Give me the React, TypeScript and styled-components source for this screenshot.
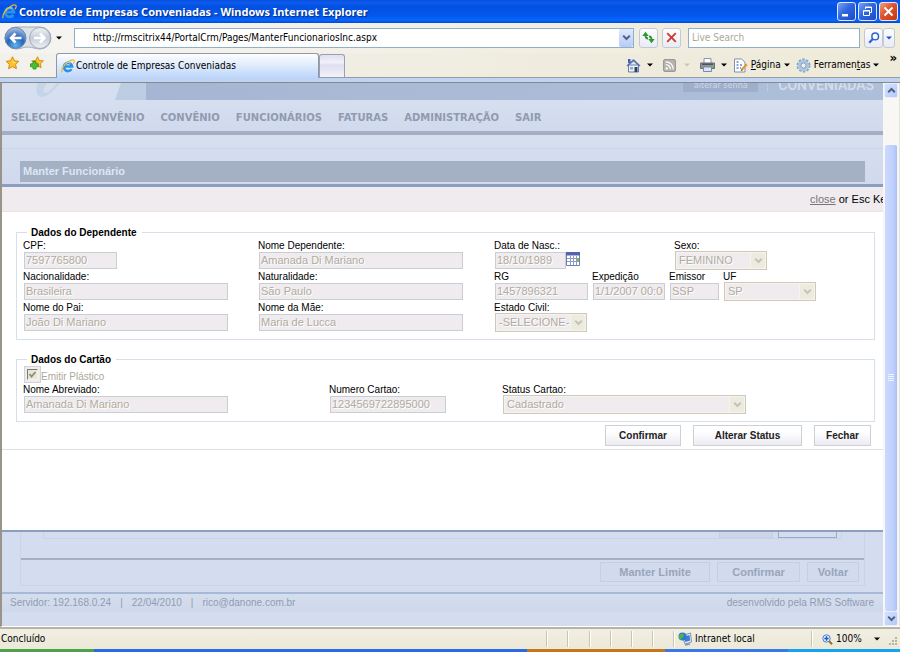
import React from 'react';
import styled, { createGlobalStyle, css } from 'styled-components';

const ui = '"DejaVu Sans Condensed", "DejaVu Sans", sans-serif';
const arial = '"Liberation Sans", Arial, sans-serif';

const GlobalStyle = createGlobalStyle`
  *, *::before, *::after { box-sizing: border-box; }
  body { margin: 0; font-family: ${arial}; font-size: 11px; color: #000; }
  button, input, select { font: inherit; margin: 0; }
`;

const Window = styled.div`
  display: flex;
  flex-direction: column;
  height: 100vh;
  overflow: hidden;
  background: #efecdf;
`;

/* ---------- window title ---------- */
const TitleBar = styled.header`
  display: flex;
  align-items: center;
  flex: none;
  height: 23px;
  padding: 0 2px 0 2px;
  gap: 2px;
  background: linear-gradient(#0a4fdc 0, #0c5cf0 12%, #0350e0 30%, #0458ee 70%, #0667fe 88%, #0349d0 100%);
`;

const WindowTitle = styled.h1`
  flex: 1;
  margin: 0;
  font: bold 11px/20px "Noto Sans", "Open Sans", sans-serif;
  color: #fff;
  text-shadow: 1px 1px 1px #0a2a80;
  white-space: nowrap;
`;

const WindowButton = styled.button<{ $close?: boolean }>`
  display: grid;
  place-items: center;
  width: 19px;
  height: 19px;
  padding: 0;
  border: 1px solid #dfe8ff;
  border-radius: 3px;
  background: ${p => (p.$close
    ? 'linear-gradient(135deg, #f0a080, #e0522c 45%, #c03a12)'
    : 'linear-gradient(135deg, #7ba2f5, #2f66e0 45%, #1c4cc8)')};
`;

/* ---------- toolbars ---------- */
const AddressRow = styled.div`
  display: flex;
  align-items: center;
  flex: none;
  height: 30px;
  padding: 0 5px 1px 4px;
  background: linear-gradient(90deg, #f5f4f2, #f1eee3 60%, #efecdc);
`;

const NavPill = styled.div`
  display: flex;
  align-items: center;
  width: 48px;
  height: 24px;
`;

const BareButton = styled.button`
  display: flex;
  align-items: center;
  padding: 0;
  border: 0;
  background: none;
  color: #000;
  font: 10px/14px ${ui};
  white-space: nowrap;
`;

const AddressBox = styled.div`
  display: flex;
  flex: 1;
  height: 20px;
  margin: 0 5px 0 12px;
  border: 1px solid #8fb0c8;
  background: #fff;
`;

const AddressInput = styled.input`
  flex: 1;
  min-width: 0;
  padding: 0 0 0 18px;
  border: 0;
  background: none;
  font: 10px/18px ${ui};
`;

const DropButton = styled.button`
  display: grid;
  place-items: center;
  width: 14px;
  padding: 0;
  border: 0;
  border-radius: 2px;
  background: linear-gradient(#dfe8fd, #b9cbf5);
`;

const SquareButton = styled.button<{ $w?: number }>`
  display: grid;
  place-items: center;
  width: ${p => p.$w ?? 19}px;
  height: 20px;
  padding: 0;
  border: 1px solid #c3c9d4;
  border-radius: 3px;
  background: linear-gradient(#fdfdfe, #e9ebf5);
`;

const ToolPair = styled.div<{ $gap: number; $left: number }>`
  display: flex;
  gap: ${p => p.$gap}px;
  margin-left: ${p => p.$left}px;
`;

const SearchInput = styled.input`
  width: 172px;
  height: 20px;
  margin-left: 7px;
  padding: 0 3px;
  border: 1px solid #8fb0c8;
  background: #fff;
  font: 10px/18px ${ui};
  &::placeholder { color: #aca899; opacity: 1; }
`;

const TabRow = styled.div`
  display: flex;
  align-items: flex-end;
  flex: none;
  height: 25px;
  padding-left: 5px;
  border-bottom: 1px solid #9c9d9b;
  background: linear-gradient(90deg, #f3f1ec, #efecdf 60%, #eeebda);
`;

const Favorites = styled.div`
  display: flex;
  gap: 9px;
  width: 51px;
  padding-bottom: 7px;
`;

const Tab = styled.button`
  display: flex;
  align-items: center;
  gap: 1px;
  width: 263px;
  height: 25px;
  margin-bottom: -1px;
  padding: 0 4px;
  border: 1px solid #8f98a8;
  border-bottom: 0;
  border-radius: 3px 3px 0 0;
  background: linear-gradient(#fdfeff 0, #e4eefc 40%, #bcd6fb 100%);
  font: 10px/14px ${ui};
  white-space: nowrap;
`;

const NewTab = styled.button`
  width: 26px;
  height: 23px;
  border: 1px solid #9aa0b0;
  border-bottom: 0;
  border-radius: 3px 3px 0 0;
  background: linear-gradient(#dfe1f0 0, #f0f1f9 35%, #dddff0 45%, #f2f2fb 100%);
`;

const Commands = styled.div`
  display: flex;
  align-items: center;
  margin-left: auto;
  height: 24px;
  padding: 0 3px 0 0;
`;

const Command = styled(BareButton)<{ $gap: number; $right: number }>`
  gap: ${p => p.$gap}px;
  margin-right: ${p => p.$right}px;
`;

const Chevrons = styled.span`
  align-self: flex-start;
  font: bold 13px/10px ${ui};
`;

const BlueStrip = styled.div`
  flex: none;
  height: 5px;
  border-bottom: 1px solid #8a8a80;
  background: #bfd3f5;
`;

/* ---------- viewport ---------- */
const Viewport = styled.div`
  display: flex;
  flex: 1;
  min-height: 0;
  border-left: 2px solid #98948a;
  border-bottom: 1px solid #fff;
  background: #fff;
`;

const Page = styled.div`
  display: flex;
  flex-direction: column;
  flex: 1;
  min-width: 0;
  overflow: hidden;
  background: #d4ddef;
  color: #8f9cb2;
`;

const Banner = styled.div`
  display: flex;
  align-items: flex-end;
  flex: none;
  height: 17px;
  overflow: hidden;
  background: linear-gradient(90deg, #a3b2d1, #a9b9d6 40%, #aebfda);
`;

const BannerButton = styled.button`
  height: 14px;
  width: 75px;
  margin: 0 9px 8px auto;
  padding: 0;
  border: 0;
  background: #9fafcb;
  color: #ccd7ea;
  font: 9px/14px ${ui};
`;

const BannerName = styled.strong`
  margin-bottom: 9px;
  padding: 0 9px 0 10px;
  font: 500 14px/12px Roboto, sans-serif;
  color: #d4deee;
  border-left: 1px dotted #ccd7ea;
`;

const MainNav = styled.nav`
  display: flex;
  flex: none;
  gap: 16px;
  height: 35px;
  padding: 11px 9px 0;
  border-bottom: 4px solid #a3afc3;
  background: linear-gradient(#d6dff0, #d1daec);
`;

const NavLink = styled.a`
  color: #8f9bb0;
  font: bold 10px/13px "DejaVu Sans", sans-serif;
  text-decoration: none;
  white-space: nowrap;
`;

const SubHeader = styled.div`
  flex: none;
  padding: 13px 18px 2px;
  background: linear-gradient(#d6dff0, #d1daec);
`;

const PageTitle = styled.h2`
  margin: 0;
  padding: 0 3px;
  background: #a4b0c4;
  color: #dde6f4;
  font: bold 11px/21px ${arial};
`;

const Dotted = styled.hr`
  margin: 0 -18px 12px;
  border: 0;
  border-top: 1px dotted #c3cde0;
`;

/* ---------- dialog ---------- */
const Dialog = styled.section`
  display: flex;
  flex-direction: column;
  flex: none;
  padding-bottom: 80px;
  border-top: 3px solid #8a9ebf;
  border-bottom: 2px solid #8a9ebf;
  background: #fff;
  color: #000;
`;

const CloseBar = styled.div`
  display: flex;
  justify-content: flex-end;
  height: 25px;
  border-bottom: 1px solid #e6e4e8;
  background: #efebee;
  font: 11px/25px ${arial};
  white-space: pre;
  overflow: hidden;
`;

const CloseText = styled.span`
  width: 73px;
  flex: none;
  a { color: #777; }
`;

const DialogForm = styled.form`
  display: flex;
  flex-direction: column;
  gap: 13px;
  padding: 14px 8px 3px 14px;
  border-bottom: 1px solid #dcdfe6;
`;

const Group = styled.fieldset`
  min-width: 0;
  margin: 0;
  padding: 0 6px 7px;
  border: 1px solid #d5e0ea;
`;

const Legend = styled.legend`
  margin-left: 4px;
  padding: 0 5px 0 4px;
  font: bold 10px/13px ${arial};
`;

const FieldRow = styled.div<{ $cols: string }>`
  display: grid;
  grid-template-columns: ${p => p.$cols};
  height: 31px;
`;

const FieldSet = styled.div`
  display: flex;
`;

const Field = styled.label<{ $slot?: number }>`
  display: block;
  width: ${p => (p.$slot ? `${p.$slot}px` : 'auto')};
  font: 10px/13px ${arial};
  white-space: nowrap;
`;

const disabledText = css`
  color: #b0ac9f;
  opacity: 1;
  text-shadow: 1px 1px #fff;
  font: 11px/15px ${arial};
`;

const TextInput = styled.input<{ $w: number }>`
  display: block;
  width: ${p => p.$w}px;
  height: 17px;
  margin-left: 1px;
  padding: 0 1px 1px;
  border: 1px solid #c8ced2;
  border-radius: 0;
  background: #efebee;
  ${disabledText}
`;

const DateLine = styled.span`
  display: flex;
  align-items: flex-start;
`;

const SelectBox = styled.span<{ $w: number }>`
  display: flex;
  width: ${p => p.$w}px;
  height: 19px;
  margin: -1px 0 0 1px;
  padding: 1px;
  border: 1px solid #cfc9bb;
  background: #f5f4ea;
`;

const Select = styled.select`
  flex: 1;
  min-width: 0;
  padding: 0 0 0 2px;
  border: 0;
  appearance: none;
  background: #efebee;
  ${disabledText}
`;

const SelectArrow = styled.span`
  display: grid;
  place-items: center;
  width: 14px;
  margin-left: 1px;
  border-radius: 2px;
  background: #edebe0;
`;

const CheckLine = styled.label`
  display: flex;
  align-items: flex-end;
  height: 17px;
  margin-left: 1px;
  color: #aca899;
  font: 10px/13px ${arial};
`;

const CheckFrame = styled.span`
  display: grid;
  place-items: center;
  width: 17px;
  height: 17px;
  border: 1px solid #d0d2d6;
  background: #efebee;
  & > * { grid-area: 1 / 1; }
`;

const Check = styled.input`
  appearance: none;
  width: 11px;
  height: 11px;
  border: 1px solid;
  border-color: #7d7b70 #f5f3ea #f5f3ea #7d7b70;
  background: #e9e6d8;
`;

const DialogActions = styled.div`
  display: flex;
  justify-content: flex-end;
  gap: 12px;
  margin-top: -10px;
  padding-right: 4px;
`;

const ActionButton = styled.button<{ $w: number }>`
  width: ${p => p.$w}px;
  height: 21px;
  padding: 0;
  border: 1px solid #cfd0d4;
  background: linear-gradient(#fff 30%, #ecebf2);
  color: #222;
  font: bold 10px/17px ${arial};
`;

/* ---------- lower page ---------- */
const Lower = styled.div`
  flex: none;
  margin: 0 18px;
  border: 1px solid #cad4e7;
  border-top: 0;
`;

const InnerPanel = styled.div`
  display: flex;
  justify-content: flex-end;
  gap: 5px;
  height: 7px;
  margin: 0 22px 19px;
  padding-right: 4px;
  border: 1px solid #c9d3e6;
  border-top: 0;
`;

const CutButton = styled.span<{ $w: number; $strong?: boolean }>`
  width: ${p => p.$w}px;
  height: 6px;
  border: 1px solid ${p => (p.$strong ? '#9cabc2' : '#c6d0e2')};
  border-top: 0;
  background: ${p => (p.$strong ? '#d4ddef' : '#cdd7e9')};
`;

const LowerActions = styled.div`
  display: flex;
  justify-content: flex-end;
  gap: 7px;
  padding: 2px 5px 3px;
  border-top: 2px solid #a3b0c5;
`;

const FadedButton = styled(ActionButton)`
  height: 20px;
  border-color: #c5cfe1;
  background: #d2dbed;
  color: #98a5ba;
  font-size: 11px;
`;

const Footer = styled.footer`
  display: flex;
  flex: none;
  gap: 9px;
  height: 20px;
  margin-top: 6px;
  padding: 0 9px 0 8px;
  border-top: 2px solid #a7b9d6;
  background: linear-gradient(#d5deef, #cfd8ea);
  font: 10px/17px ${arial};
  white-space: nowrap;
`;

const FooterRight = styled.span`
  margin-left: auto;
`;

/* ---------- scrollbar ---------- */
const ScrollBar = styled.div`
  display: flex;
  flex-direction: column;
  flex: none;
  width: 17px;
  padding: 0 1px;
  border-right: 1px solid #e6e3d6;
  background: #f8f7f3;
`;

const ScrollButton = styled.button`
  display: grid;
  place-items: center;
  height: 15px;
  padding: 0;
  border: 1px solid #e6edff;
  border-radius: 2px;
  background: linear-gradient(135deg, #d6e2fd, #b4c8f8);
`;

const ScrollThumb = styled.div`
  display: grid;
  place-items: center;
  flex: 1;
  margin: 47px 1px 0;
  border-radius: 2px;
  background: linear-gradient(90deg, #cbd9ff, #bed0fd 70%, #a9bff5);
`;

/* ---------- status bar ---------- */
const StatusBar = styled.div`
  display: flex;
  align-items: stretch;
  flex: none;
  height: 22px;
  padding: 2px 2px 0 1px;
  border-top: 2px solid #b8b4a4;
  background: linear-gradient(#f1eee3, #ece9d8);
  font: 10px/16px ${ui};
`;

const StatusText = styled.span`
  flex: 1;
`;

const StatusCell = styled.span<{ $w: number }>`
  display: flex;
  align-items: center;
  gap: 3px;
  width: ${p => p.$w}px;
  height: 16px;
  padding-left: 4px;
  border-left: 1px solid #c9c5b4;
  box-shadow: inset 1px 0 #fff;
`;

const ZoomButton = styled(BareButton)`
  gap: 3px;
  width: 64px;
  padding-left: 6px;
  svg:last-child { margin-left: auto; }
`;

const TaskBar = styled.div`
  display: grid;
  grid-template-columns: 94fr 433fr 138fr 123fr 112fr;
  flex: none;
  height: 3px;
`;

const TaskPart = styled.span<{ $c: string }>`
  background: ${p => p.$c};
`;

/* ---------- drawings ---------- */
const IELogo = ({ size }: { size: number }) => (
  <svg width={size} height={size} viewBox="0 0 16 16" fill="none" aria-hidden="true">
    <path d="M4.5 8.6h8.2A4.7 4.7 0 1 0 12 11.6" stroke="#2b93e6" strokeWidth="3" />
    <path d="M4 7.3a4.6 4.6 0 0 1 7-2.600" stroke="#8fd2fb" strokeWidth="1.400" />
    <path d="M1.4 15.2C-.6 12.4 4 5.600 9 2.600 12 .8 15.200.2 15.200 2.500 15.200 3.600 14.600 4.600 14 5.400" stroke="#f0b429" strokeWidth="1.300" />
  </svg>
);

const Caret = ({ color = '#000' }: { color?: string }) => (
  <svg width="6" height="4" viewBox="0 0 6 4" aria-hidden="true"><path d="M0 .5h6L3 3.500z" fill={color} /></svg>
);

const Chevron = ({ color = '#4d6185', up = false }: { color?: string; up?: boolean }) => (
  <svg width="9" height="7" viewBox="0 0 9 7" fill="none" aria-hidden="true">
    <path d={up ? 'M1.200 5.200 4.500 2l3.300 3.200' : 'M1.200 1.600 4.500 5l3.300-3.400'} stroke={color} strokeWidth="2" />
  </svg>
);

const BackForward = () => (
  <svg width="48" height="24" viewBox="0 0 48 24" aria-hidden="true">
    <defs>
      <radialGradient id="back" cx=".5" cy=".85" r=".8">
        <stop offset="0" stopColor="#5fb4ee" /><stop offset=".5" stopColor="#2465bd" /><stop offset="1" stopColor="#9fb9dc" />
      </radialGradient>
      <linearGradient id="fwd" x1="0" y1="0" x2="0" y2="1">
        <stop offset="0" stopColor="#f2f4f8" /><stop offset=".5" stopColor="#c5ccd9" /><stop offset="1" stopColor="#edf1f7" />
      </linearGradient>
    </defs>
    <path d="M12 1h24a11 11 0 0 1 0 22c-5 0-7-2-12-2s-7 2-12 2A11 11 0 0 1 12 1z" fill="#dde1e8" stroke="#a5abb6" />
    <circle cx="11.500" cy="12" r="10.500" fill="url(#back)" stroke="#6c87ad" />
    <path d="M17.500 12H7m4.500-4.500L7 12l4.500 4.500" stroke="#fff" strokeWidth="2.600" fill="none" />
    <circle cx="36" cy="12" r="10.500" fill="url(#fwd)" stroke="#a3a9b5" />
    <path d="M30 12h10.500M36 7.500l4.500 4.500-4.500 4.500" stroke="#fff" strokeWidth="2.600" fill="none" />
  </svg>
);

const star = 'M7 .8l1.900 4 4.400.5-3.200 3 .8 4.400L7 10.600l-3.900 2.100.8-4.400-3.200-3 4.400-.5z';
const Star = () => (
  <svg width="15" height="14" viewBox="0 0 14 14" aria-hidden="true">
    <path d={star} fill="#fcc42c" stroke="#d88a14" /><path d="M7 3l1 3 3 .2-3.500.8z" fill="#ffe98c" />
  </svg>
);
const AddStar = () => (
  <svg width="15" height="14" viewBox="0 0 14 14" aria-hidden="true">
    <path d={star} transform="translate(1.500 0) scale(.93)" fill="#fcc42c" stroke="#d88a14" />
    <path d="M3.500 5.500h3v2.300h2.300v3H6.500V13h-3v-2.200H1v-3h2.500z" fill="#4cc22e" stroke="#2b8a1b" strokeWidth=".8" />
  </svg>
);

const Home = () => (
  <svg width="15" height="15" viewBox="0 0 15 15" aria-hidden="true">
    <path d="M2.500 7h10v7h-10z" fill="#eef1f8" stroke="#6b7d9f" />
    <path d="M2 1h2.500v4H2z" fill="#3f62b8" />
    <path d="M7.500 1 .5 7.500l1.300 1L7.500 3.500l5.700 5 1.300-1z" fill="#5873b8" />
    <path d="M8.500 9h3v5h-3z" fill="#27406f" /><path d="M4 9h3v2.500H4z" fill="#86a9dd" />
  </svg>
);
const Feed = () => (
  <svg width="13" height="13" viewBox="0 0 13 13" fill="none" aria-hidden="true">
    <rect x=".5" y=".5" width="12" height="12" rx="1.500" fill="#b3b2ac" stroke="#999892" />
    <circle cx="3.700" cy="9.400" r="1.200" fill="#fff" />
    <path d="M2.800 5.700a4.500 4.500 0 0 1 4.600 4.600M2.800 2.800a7.400 7.400 0 0 1 7.500 7.500" stroke="#fff" strokeWidth="1.300" />
  </svg>
);
const Printer = () => (
  <svg width="15" height="14" viewBox="0 0 15 14" aria-hidden="true">
    <path d="M4 .5h7V6H4z" fill="#fff" stroke="#8795ad" />
    <path d="M.5 5h14v5.500H.5z" fill="#8d9299" stroke="#6b7078" /><path d="M2 5.500h11V7H2z" fill="#50545b" />
    <path d="M3.500 9h8v4.500h-8z" fill="#d7e6fb" stroke="#7b8aa5" /><circle cx="12.500" cy="8.500" r=".8" fill="#56d13e" />
  </svg>
);
const PageIcon = () => (
  <svg width="15" height="15" viewBox="0 0 15 15" fill="none" aria-hidden="true">
    <path d="M1.500 1h7L12 4.300V14H1.500z" fill="#fff" stroke="#7f8fae" />
    <path d="M3.500 4h2M3.500 7h2m1.500 0h2M3.500 10h2m1.500 0h1" stroke="#6584c4" strokeWidth="1.400" />
    <path d="M13.800 6.200 8.500 12" stroke="#dd9b2f" strokeWidth="2.200" /><path d="M8.700 11.200l-1 2 2-.9z" fill="#5a4423" />
  </svg>
);
const Gear = () => (
  <svg width="15" height="15" viewBox="0 0 15 15" fill="none" aria-hidden="true">
    <circle cx="7.500" cy="7.500" r="6" stroke="#7e9fc0" strokeWidth="2" strokeDasharray="2.300 1.470" />
    <circle cx="7.500" cy="7.500" r="4.200" stroke="#a9c5e0" strokeWidth="3.200" />
    <circle cx="7.500" cy="7.500" r="2.500" fill="#f2f1e8" stroke="#6f92b6" strokeWidth=".8" />
  </svg>
);
const Magnifier = () => (
  <svg width="12" height="12" viewBox="0 0 12 12" fill="none" aria-hidden="true">
    <circle cx="7.200" cy="4.400" r="3.300" fill="#fff" stroke="#2b63d4" strokeWidth="1.500" />
    <path d="M4.800 6.900 1.200 10.700" stroke="#2b63d4" strokeWidth="2.200" />
  </svg>
);
const Refresh = () => (
  <svg width="13" height="13" viewBox="0 0 13 13" fill="none" aria-hidden="true">
    <path d="M3.500 4.500C3.500 6.500 4.500 7.500 6 7.500" stroke="#2c9a2c" strokeWidth="1.800" />
    <path d="M3.500.8 6.700 5H.3z" fill="#2c9a2c" />
    <path d="M9.500 8.500C9.500 6.500 8.500 5.500 7 5.500" stroke="#2c9a2c" strokeWidth="1.800" />
    <path d="M9.500 12.200 6.300 8h6.400z" fill="#2c9a2c" />
  </svg>
);
const Stop = () => (
  <svg width="11" height="11" viewBox="0 0 11 11" aria-hidden="true">
    <path d="M1.200 1.200 9.800 9.800M9.800 1.200 1.200 9.800" stroke="#cf3b32" strokeWidth="1.900" />
  </svg>
);
const CalendarIcon = () => (
  <svg width="14" height="14" viewBox="0 0 14 14" aria-hidden="true">
    <path d="M.5.5h13v13H.5z" fill="#fff" stroke="#6e7fb5" />
    <path d="M0 0h14v3.500H0z" fill="#5365a8" />
    <path d="M1 6.500h12M1 9.500h12M4.500 4v9M7.500 4v9M10.500 4v9" stroke="#8d9bc8" />
    <path d="M10 6h3v3h-3z" fill="#86b254" />
  </svg>
);
const BannerArt = () => (
  <svg width="144" height="17" viewBox="0 0 144 17" aria-hidden="true">
    <path d="M0 0h144v17H0z" fill="#bccde4" /><path d="M0 0h119l-6 17H0z" fill="#d5dff0" />
    <path d="M36 0c-3 6-2 13 3 14C46 14 52 7 58 0h-3C50 6 46 10 43 10c-3-1-1-6 2-10z" fill="#c6d4e9" />
  </svg>
);
const ComputerIcon = () => (
  <svg width="14" height="14" viewBox="0 0 14 14" aria-hidden="true">
    <path d="M4 3.500 12.500 1l1 9L7 12z" fill="#e6ebf2" stroke="#8594aa" /><path d="M5.500 4.500 11.500 3l.7 5.500-5 1.500z" fill="#3c7ce0" />
    <circle cx="4.500" cy="4.500" r="4" fill="#2b79cf" /><path d="M2 2.500c2-2 4-1 4 1S3 5 3.500 8C1 7 0 4.500 2 2.500z" fill="#4db345" />
    <path d="M7 13l5-1" stroke="#8594aa" strokeWidth="1.500" />
  </svg>
);
const ZoomIcon = () => (
  <svg width="11" height="11" viewBox="0 0 11 11" fill="none" aria-hidden="true">
    <path d="M7 7l3 3.200" stroke="#9a6a35" strokeWidth="2" /><circle cx="4.500" cy="4.500" r="3.700" fill="#e3f0ff" stroke="#4d80bf" />
    <path d="M4.500 2.300v4.400M2.300 4.500h4.400" stroke="#1f5fc4" strokeWidth="1.500" />
  </svg>
);

/* ---------- form parts ---------- */
const TextField = ({ label, value, w, slot }: { label: string; value: string; w: number; slot?: number }) => (
  <Field $slot={slot}>{label}<TextInput $w={w} defaultValue={value} disabled /></Field>
);

const SelectField = ({ label, value, w, slot }: { label: string; value: string; w: number; slot?: number }) => (
  <Field $slot={slot}>
    {label}
    <SelectBox $w={w}>
      <Select disabled defaultValue={value}><option>{value}</option></Select>
      <SelectArrow><Chevron color="#c5c2b5" /></SelectArrow>
    </SelectBox>
  </Field>
);

const columns = '235fr 236fr 374fr';
const menu = ['SELECIONAR CONVÊNIO', 'CONVÊNIO', 'FUNCIONÁRIOS', 'FATURAS', 'ADMINISTRAÇÃO', 'SAIR'];

export default function App() {
  return (
    <Window>
      <GlobalStyle />
      <TitleBar>
        <IELogo size={15} />
        <WindowTitle>Controle de Empresas Conveniadas - Windows Internet Explorer</WindowTitle>
        <WindowButton aria-label="Minimizar">
          <svg width="11" height="11"><path d="M1 8h6v2.500H1z" fill="#fff" /></svg>
        </WindowButton>
        <WindowButton aria-label="Restaurar">
          <svg width="11" height="11" fill="none" stroke="#fff"><path d="M3.500 3V1h6v5.500H8M1.500 4.500h6v5h-6zM1 5h7M3.500 1.500h6" /></svg>
        </WindowButton>
        <WindowButton $close aria-label="Fechar janela">
          <svg width="11" height="11"><path d="M1.500 1.500l8 8m0-8l-8 8" stroke="#fff" strokeWidth="2" /></svg>
        </WindowButton>
      </TitleBar>

      <AddressRow>
        <NavPill><BareButton aria-label="Voltar e avançar"><BackForward /></BareButton></NavPill>
        <ToolPair $gap={0} $left={4}><BareButton aria-label="Histórico"><Caret /></BareButton></ToolPair>
        <AddressBox>
          <AddressInput aria-label="Endereço" defaultValue="http://rmscitrix44/PortalCrm/Pages/ManterFuncionariosInc.aspx" />
          <DropButton aria-label="Endereços"><Chevron /></DropButton>
        </AddressBox>
        <ToolPair $gap={4} $left={0}>
          <SquareButton aria-label="Atualizar"><Refresh /></SquareButton>
          <SquareButton aria-label="Parar"><Stop /></SquareButton>
        </ToolPair>
        <SearchInput aria-label="Pesquisar" placeholder="Live Search" />
        <ToolPair $gap={0} $left={4}>
          <SquareButton aria-label="Buscar"><Magnifier /></SquareButton>
          <SquareButton $w={12} aria-label="Opções de busca"><Caret color="#1c55c8" /></SquareButton>
        </ToolPair>
      </AddressRow>

      <TabRow>
        <Favorites>
          <BareButton aria-label="Favoritos"><Star /></BareButton>
          <BareButton aria-label="Adicionar favorito"><AddStar /></BareButton>
        </Favorites>
        <Tab><IELogo size={14} />Controle de Empresas Conveniadas</Tab>
        <NewTab aria-label="Nova guia" />
        <Commands>
          <Command $gap={6} $right={10} aria-label="Início"><Home /><Caret /></Command>
          <Command $gap={8} $right={10} aria-label="Feeds"><Feed /><Caret color="#c9c5b8" /></Command>
          <Command $gap={6} $right={6} aria-label="Imprimir"><Printer /><Caret /></Command>
          <Command $gap={3} $right={6}><PageIcon /><span><u>P</u>ágina</span><Caret /></Command>
          <Command $gap={3} $right={10}><Gear /><span>Ferramen<u>t</u>as</span><Caret /></Command>
          <Chevrons>»</Chevrons>
        </Commands>
      </TabRow>
      <BlueStrip />

      <Viewport>
        <Page>
          <Banner>
            <BannerArt />
            <BannerButton>alterar senha</BannerButton>
            <BannerName>CONVENIADAS</BannerName>
          </Banner>
          <MainNav>{menu.map(m => <NavLink key={m} href="#">{m}</NavLink>)}</MainNav>
          <SubHeader>
            <Dotted />
            <PageTitle>Manter Funcionário</PageTitle>
          </SubHeader>

          <Dialog role="dialog" aria-label="Dependente">
            <CloseBar><CloseText><a href="#">close</a> or Esc Key</CloseText></CloseBar>
            <DialogForm onSubmit={e => e.preventDefault()}>
              <Group>
                <Legend>Dados do Dependente</Legend>
                <FieldRow $cols={columns}>
                  <TextField label="CPF:" value="7597765800" w={93} />
                  <TextField label="Nome Dependente:" value="Amanada Di Mariano" w={204} />
                  <FieldSet>
                    <Field $slot={180}>
                      Data de Nasc.:
                      <DateLine>
                        <TextInput $w={71} defaultValue="18/10/1989" disabled />
                        <CalendarIcon />
                      </DateLine>
                    </Field>
                    <SelectField label="Sexo:" value="FEMININO" w={92} />
                  </FieldSet>
                </FieldRow>
                <FieldRow $cols={columns}>
                  <TextField label="Nacionalidade:" value="Brasileira" w={204} />
                  <TextField label="Naturalidade:" value="São Paulo" w={204} />
                  <FieldSet>
                    <TextField label="RG" value="1457896321" w={93} slot={98} />
                    <TextField label="Expedição" value="1/1/2007 00:00:00" w={72} slot={77} />
                    <TextField label="Emissor" value="SSP" w={49} slot={54} />
                    <SelectField label="UF" value="SP" w={92} />
                  </FieldSet>
                </FieldRow>
                <FieldRow $cols={columns}>
                  <TextField label="Nome do Pai:" value="João Di Mariano" w={204} />
                  <TextField label="Nome da Mãe:" value="Maria de Lucca" w={204} />
                  <SelectField label="Estado Civil:" value="-SELECIONE-" w={92} />
                </FieldRow>
              </Group>

              <Group>
                <Legend>Dados do Cartão</Legend>
                <CheckLine>
                  <CheckFrame>
                    <Check type="checkbox" defaultChecked disabled />
                    <svg width="9" height="9" fill="none"><path d="M1.500 4l2 2.500 4-4.500" stroke="#8f8c7d" strokeWidth="1.800" /></svg>
                  </CheckFrame>
                  Emitir Plástico
                </CheckLine>
                <FieldRow $cols="306fr 173fr 366fr">
                  <TextField label="Nome Abreviado:" value="Amanada Di Mariano" w={204} />
                  <TextField label="Numero Cartao:" value="1234569722895000" w={116} />
                  <SelectField label="Status Cartao:" value="Cadastrado" w={243} />
                </FieldRow>
              </Group>
              <DialogActions>
                <ActionButton $w={76}>Confirmar</ActionButton>
                <ActionButton $w={109}>Alterar Status</ActionButton>
                <ActionButton $w={57}>Fechar</ActionButton>
              </DialogActions>
            </DialogForm>
          </Dialog>

          <Lower>
            <InnerPanel><CutButton $w={54} /><CutButton $w={59} $strong /></InnerPanel>
            <LowerActions>
              <FadedButton $w={110}>Manter Limite</FadedButton>
              <FadedButton $w={83}>Confirmar</FadedButton>
              <FadedButton $w={52}>Voltar</FadedButton>
            </LowerActions>
          </Lower>
          <Footer>
            <span>Servidor: 192.168.0.24</span><span>|</span><span>22/04/2010</span><span>|</span><span>rico@danone.com.br</span>
            <FooterRight>desenvolvido pela RMS Software</FooterRight>
          </Footer>
        </Page>
        <ScrollBar>
          <ScrollButton aria-label="Rolar para cima"><Chevron up /></ScrollButton>
          <ScrollThumb><svg width="7" height="8"><path d="M0 .5h6M0 2.500h6M0 4.500h6M0 6.500h6" stroke="#eef4ff" /></svg></ScrollThumb>
          <ScrollButton aria-label="Rolar para baixo"><Chevron /></ScrollButton>
        </ScrollBar>
      </Viewport>

      <StatusBar>
        <StatusText>Concluído</StatusText>
        <StatusCell $w={21} /><StatusCell $w={22} /><StatusCell $w={21} /><StatusCell $w={21} /><StatusCell $w={21} /><StatusCell $w={21} />
        <StatusCell $w={138}><ComputerIcon />Intranet local</StatusCell>
        <StatusCell $w={77}><ZoomButton><ZoomIcon />100%<Caret /></ZoomButton></StatusCell>
        <svg width="10" height="15"><path d="M7 13h2M4 13h2M1 13h2M7 10h2M4 10h2M7 7h2" stroke="#b8b4a2" strokeWidth="2" /></svg>
      </StatusBar>
      <TaskBar>
        <TaskPart $c="#4ba24a" /><TaskPart $c="#2a6ae4" /><TaskPart $c="#c8761c" /><TaskPart $c="#3a78ea" /><TaskPart $c="#12a4ee" />
      </TaskBar>
    </Window>
  );
}
